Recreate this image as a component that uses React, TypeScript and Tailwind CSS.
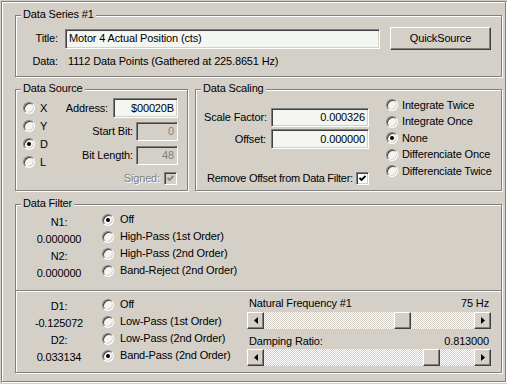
import type { ReactNode } from "react";
import clsx from "clsx";

const etched = "border border-[#808080] shadow-[inset_1px_1px_0_#fff,1px_1px_0_#fff]";
const sunken =
  "border border-t-[#808080] border-l-[#808080] border-r-white border-b-white shadow-[inset_1px_1px_0_#404040,inset_-1px_-1px_0_#d4d0c8]";
const raised =
  "border border-t-white border-l-white border-r-[#404040] border-b-[#404040] shadow-[inset_-1px_-1px_0_#808080]";
const dim = "text-[#808080] [text-shadow:1px_1px_0_#fff]";

function Group({ title, className, children }: { title?: string; className?: string; children: ReactNode }) {
  return (
    <div className={clsx("relative", etched, className)}>
      {title && (
        <span className="absolute -top-[8px] left-[5px] bg-[#d4d0c8] px-[2px] leading-[13px]">{title}</span>
      )}
      {children}
    </div>
  );
}

function Radio({ on }: { on?: boolean }) {
  return (
    <span
      className={clsx(
        "flex h-[12px] w-[12px] shrink-0 items-center justify-center rounded-full bg-[#f4f4f2]",
        sunken
      )}
    >
      {on && <span className="h-[4px] w-[4px] rounded-full bg-black" />}
    </span>
  );
}

function Check({ disabled }: { disabled?: boolean }) {
  return (
    <span
      className={clsx(
        "flex h-[13px] w-[13px] shrink-0 items-center justify-center",
        sunken,
        disabled ? "bg-[#d4d0c8]" : "bg-white"
      )}
    >
      <svg width="7" height="7" viewBox="0 0 7 7">
        <polyline
          points="0.5,3 2.5,5 6.5,1"
          fill="none"
          stroke={disabled ? "#808080" : "#000"}
          strokeWidth="1.8"
        />
      </svg>
    </span>
  );
}

function Field({ value, className, disabled, right }: { value: string; className?: string; disabled?: boolean; right?: boolean }) {
  return (
    <div
      className={clsx(
        "flex items-center px-[3px] leading-[13px]",
        sunken,
        disabled ? "bg-[#d4d0c8] text-[#808080]" : "bg-[#f3f6f1]",
        right ? "justify-end" : "justify-start",
        className
      )}
    >
      {value}
    </div>
  );
}

function Arrow({ dir }: { dir: "l" | "r" }) {
  return (
    <div className={clsx("flex h-[17px] w-[17px] shrink-0 items-center justify-center bg-[#d4d0c8]", raised)}>
      <svg width="4" height="7" viewBox="0 0 4 7">
        <polygon points={dir === "l" ? "4,0 4,7 0,3.5" : "0,0 0,7 4,3.5"} fill="#000" />
      </svg>
    </div>
  );
}

function Scroll({ offset }: { offset: number }) {
  return (
    <div className="flex h-[17px] w-[244px]">
      <Arrow dir="l" />
      <div className="flex flex-1 bg-[repeating-conic-gradient(#fff_0_25%,#d4d0c8_0_50%)] bg-[length:2px_2px]">
        <div className="shrink-0" style={{ width: offset }} />
        <div className={clsx("h-[17px] w-[17px] bg-[#d4d0c8]", raised)} />
      </div>
      <Arrow dir="r" />
    </div>
  );
}

function RadioRow({ on, label, h, gap }: { on?: boolean; label: string; h: string; gap: string }) {
  return (
    <div className={clsx("flex items-center whitespace-nowrap", h, gap)}>
      <Radio on={on} />
      <span className="leading-[13px]">{label}</span>
    </div>
  );
}

export default function App() {
  return (
    <div className="h-[384px] w-[507px] bg-[#d4d0c8] pl-px pt-px font-['Liberation_Sans',Arial,sans-serif] text-[11px] tracking-[-0.15px] text-black">
      <div className={clsx("flex h-[381px] w-[505px] flex-col pl-[13px] pt-[13px]", etched)}>
        {/* Data Series */}
        <Group title="Data Series #1" className="h-[62px] w-[487px] shrink-0">
          <div className="flex h-[23px] items-center pl-[14px] mt-[11px]">
            <span className="w-[28px] text-right">Title:</span>
            <Field value="Motor 4 Actual Position (cts)" className="ml-[7px] h-[20px] w-[315px]" />
            <button className={clsx("ml-[10px] h-[23px] w-[101px] bg-[#d4d0c8] leading-[13px]", raised)}>
              QuickSource
            </button>
          </div>
          <div className="mt-[5px] flex h-[13px] items-center pl-[14px] leading-[13px]">
            <span className="w-[28px] text-right">Data:</span>
            <span className="ml-[10px]">1112 Data Points (Gathered at 225.8651 Hz)</span>
          </div>
        </Group>

        <div className="mt-[12px] flex gap-[7px]">
          {/* Data Source */}
          <Group title="Data Source" className="flex h-[102px] w-[173px] shrink-0">
            <div className="flex flex-col pl-[7px] pt-[9px]">
              <RadioRow label="X" h="h-[18px]" gap="gap-[5px]" />
              <RadioRow label="Y" h="h-[18px]" gap="gap-[5px]" />
              <RadioRow label="D" on h="h-[18px]" gap="gap-[5px]" />
              <RadioRow label="L" h="h-[18px]" gap="gap-[5px]" />
            </div>
            <div className="ml-auto flex flex-col items-end pr-[9px] pt-[8px] leading-[13px]">
              <div className="flex h-[20px] items-center gap-[5px]">
                <span>Address:</span>
                <Field value="$00020B" right className="h-[20px] w-[65px]" />
              </div>
              <div className="mt-[4px] flex h-[19px] items-center gap-[3px]">
                <span>Start Bit:</span>
                <Field value="0" right disabled className="h-[19px] w-[42px]" />
              </div>
              <div className="mt-[5px] flex h-[19px] items-center gap-[3px]">
                <span>Bit Length:</span>
                <Field value="48" right disabled className="h-[19px] w-[42px]" />
              </div>
              <div className="mt-[6px] mr-[1px] flex h-[14px] items-center gap-[4px]">
                <span className={dim}>Signed:</span>
                <Check disabled />
              </div>
            </div>
          </Group>

          {/* Data Scaling */}
          <Group title="Data Scaling" className="flex h-[102px] w-[307px] shrink-0">
            <div className="flex w-[173px] shrink-0 flex-col pl-[8px] pt-[18px] leading-[13px]">
              <div className="flex h-[19px] items-center">
                <span className="w-[62px] whitespace-nowrap text-right">Scale Factor:</span>
                <Field value="0.000326" right className="ml-[5px] h-[19px] w-[98px]" />
              </div>
              <div className="mt-[2px] flex h-[20px] items-center">
                <span className="w-[62px] whitespace-nowrap text-right">Offset:</span>
                <Field value="0.000000" right className="ml-[5px] h-[20px] w-[98px]" />
              </div>
              <div className="mt-[22px] flex h-[14px] items-center gap-[3px] whitespace-nowrap pl-[3px] tracking-[-0.3px]">
                <span>Remove Offset from Data Filter:</span>
                <Check />
              </div>
            </div>
            <div className="ml-[17px] flex flex-col pt-[7px]">
              <RadioRow label="Integrate Twice" h="h-[16.5px]" gap="gap-[4px]" />
              <RadioRow label="Integrate Once" h="h-[16.5px]" gap="gap-[4px]" />
              <RadioRow label="None" on h="h-[16.5px]" gap="gap-[4px]" />
              <RadioRow label="Differenciate Once" h="h-[16.5px]" gap="gap-[4px]" />
              <RadioRow label="Differenciate Twice" h="h-[16.5px]" gap="gap-[4px]" />
            </div>
          </Group>
        </div>

        {/* Data Filter */}
        <Group title="Data Filter" className="mt-[13px] flex h-[169px] w-[487px] shrink-0 flex-col">
          <div className="flex h-[85px] shrink-0">
            <div className="ml-[14px] flex w-[58px] flex-col pt-[9px] text-center leading-[17px]">
              <span>N1:</span>
              <span>0.000000</span>
              <span>N2:</span>
              <span>0.000000</span>
            </div>
            <div className="ml-[14px] flex flex-col pt-[6px]">
              <RadioRow label="Off" on h="h-[17px]" gap="gap-[6px]" />
              <RadioRow label="High-Pass (1st Order)" h="h-[17px]" gap="gap-[6px]" />
              <RadioRow label="High-Pass (2nd Order)" h="h-[17px]" gap="gap-[6px]" />
              <RadioRow label="Band-Reject (2nd Order)" h="h-[17px]" gap="gap-[6px]" />
            </div>
          </div>
          <div className="h-[2px] shrink-0 border-t border-b border-t-[#808080] border-b-white" />
          <div className="flex flex-1">
            <div className="ml-[14px] flex w-[58px] flex-col pt-[6px] text-center leading-[17px]">
              <span>D1:</span>
              <span>-0.125072</span>
              <span>D2:</span>
              <span>0.033134</span>
            </div>
            <div className="ml-[14px] flex w-[145px] flex-col pt-[4px]">
              <RadioRow label="Off" h="h-[17px]" gap="gap-[6px]" />
              <RadioRow label="Low-Pass (1st Order)" h="h-[17px]" gap="gap-[6px]" />
              <RadioRow label="Low-Pass (2nd Order)" h="h-[17px]" gap="gap-[6px]" />
              <RadioRow label="Band-Pass (2nd Order)" on h="h-[17px]" gap="gap-[6px]" />
            </div>
            <div className="flex w-[244px] flex-col pt-[4px] leading-[13px]">
              <div className="flex h-[14px] items-center justify-between px-[2px]">
                <span>Natural Frequency #1</span>
                <span>75 Hz</span>
              </div>
              <div className="mt-[2px]">
                <Scroll offset={130} />
              </div>
              <div className="mt-[5px] flex h-[14px] items-center justify-between px-[2px]">
                <span>Damping Ratio:</span>
                <span>0.813000</span>
              </div>
              <div className="mt-[1px]">
                <Scroll offset={159} />
              </div>
            </div>
          </div>
        </Group>
      </div>
    </div>
  );
}
